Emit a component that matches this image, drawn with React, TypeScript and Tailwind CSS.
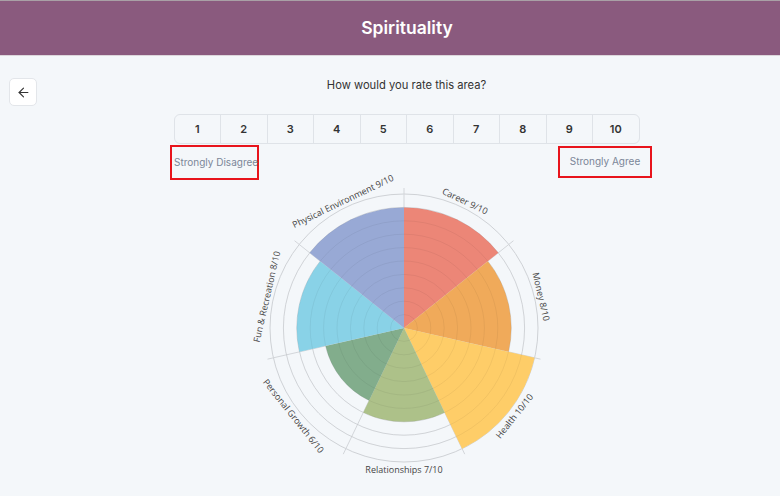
import { ArrowLeft } from 'lucide-react';

const areas = [
  { name: 'Career', value: 9, color: '#ec8677' },
  { name: 'Money', value: 8, color: '#f0aa5a' },
  { name: 'Health', value: 10, color: '#fecd68' },
  { name: 'Relationships', value: 7, color: '#adc189' },
  { name: 'Personal Growth', value: 6, color: '#82ad8c' },
  { name: 'Fun & Recreation', value: 8, color: '#89d2e7' },
  { name: 'Physical Environment', value: 9, color: '#98a9d5' },
];

const CX = 160;
const CY = 166;
const UNIT = 13.4;
const STEP = 360 / areas.length;

function pt(deg: number, r: number) {
  const a = (deg * Math.PI) / 180;
  return [CX + r * Math.sin(a), CY - r * Math.cos(a)];
}

function sector(start: number, end: number, r: number) {
  const [x1, y1] = pt(start, r);
  const [x2, y2] = pt(end, r);
  return `M${CX},${CY} L${x1},${y1} A${r},${r} 0 0 1 ${x2},${y2} Z`;
}

function WheelChart() {
  return (
    <svg width="320" height="330" viewBox="0 0 320 330" style={{ fontFamily: '"Open Sans", sans-serif', overflow: 'visible' }}>
      {Array.from({ length: 9 }, (_, i) => (
        <circle key={i} cx={CX} cy={CY} r={(i + 1) * UNIT} fill="none" stroke="#dcdfe3" strokeWidth="1" />
      ))}
      <circle cx={CX} cy={CY} r={10 * UNIT} fill="none" stroke="#cfd2d6" strokeWidth="1" />
      {areas.map((a, i) => {
        const [x, y] = pt(i * STEP, 10 * UNIT + 6);
        return <line key={a.name} x1={CX} y1={CY} x2={x} y2={y} stroke="#d3d6da" strokeWidth="1" />;
      })}
      {areas.map((a, i) => (
        <path key={a.name} d={sector(i * STEP, (i + 1) * STEP, a.value * UNIT)} fill={a.color} />
      ))}
      {Array.from({ length: 9 }, (_, i) => (
        <circle key={i} cx={CX} cy={CY} r={(i + 1) * UNIT} fill="none" stroke="rgba(0,0,0,0.05)" strokeWidth="1" />
      ))}
      {areas.map((a, i) => {
        const mid = (i + 0.5) * STEP;
        const [x, y] = pt(mid, 141);
        const rot = mid > 90 && mid < 270 ? mid - 180 : mid > 270 ? mid - 360 : mid;
        return (
          <text
            key={a.name}
            x={x}
            y={y}
            fontSize="9"
            fill="#444"
            textAnchor="middle"
            dominantBaseline="central"
            transform={`rotate(${rot} ${x} ${y})`}
          >
            {a.name} {a.value}/10
          </text>
        );
      })}
    </svg>
  );
}

export default function App() {
  return (
    <div className="min-h-[496px] bg-[#f4f7fa]" style={{ fontFamily: 'Inter, "Noto Sans", sans-serif' }}>
      <header className="flex h-[56px] items-center justify-center border-t border-[#a9a0a6] border-b border-b-[#dcd6db] bg-[#8a5a7e]">
        <h1 className="ml-[34px] text-[17.5px] font-semibold text-white">Spirituality</h1>
      </header>
      <div className="flex pt-[21px]">
        <div className="pl-[9px]">
          <button className="mt-[1px] flex h-[28px] w-[28px] items-center justify-center rounded-[5px] border border-[#e3e6ea] bg-white text-[#333]">
            <ArrowLeft size={15} strokeWidth={1.8} />
          </button>
        </div>
        <div className="flex flex-1 flex-col items-center pr-[4px]">
          <p className="text-[11.2px] text-[#333]">How would you rate this area?</p>
          <div className="mt-[20px] flex h-[30px] w-[466px] overflow-hidden rounded-[6px] border border-[#dfe3e8]">
            {Array.from({ length: 10 }, (_, i) => (
              <div
                key={i}
                className="flex flex-1 items-center justify-center border-l border-[#dfe3e8] text-[11px] font-semibold text-[#333] first:border-l-0"
              >
                {i + 1}
              </div>
            ))}
          </div>
          <div className="ml-[9px] mt-[1px] flex w-[482px] justify-between">
            <div className="flex h-[35px] w-[89px] items-center whitespace-nowrap border-2 border-[#e8141c] pl-[2px] text-[10px] text-[#7b8698]">
              Strongly Disagree
            </div>
            <div className="mt-[1px] flex h-[32px] w-[94px] items-center justify-center whitespace-nowrap border-2 border-[#e8141c] text-[10px] text-[#7b8698]">
              Strongly Agree
            </div>
          </div>
          <div className="ml-[-6px] mt-[-18px]">
            <WheelChart />
          </div>
        </div>
      </div>
    </div>
  );
}
